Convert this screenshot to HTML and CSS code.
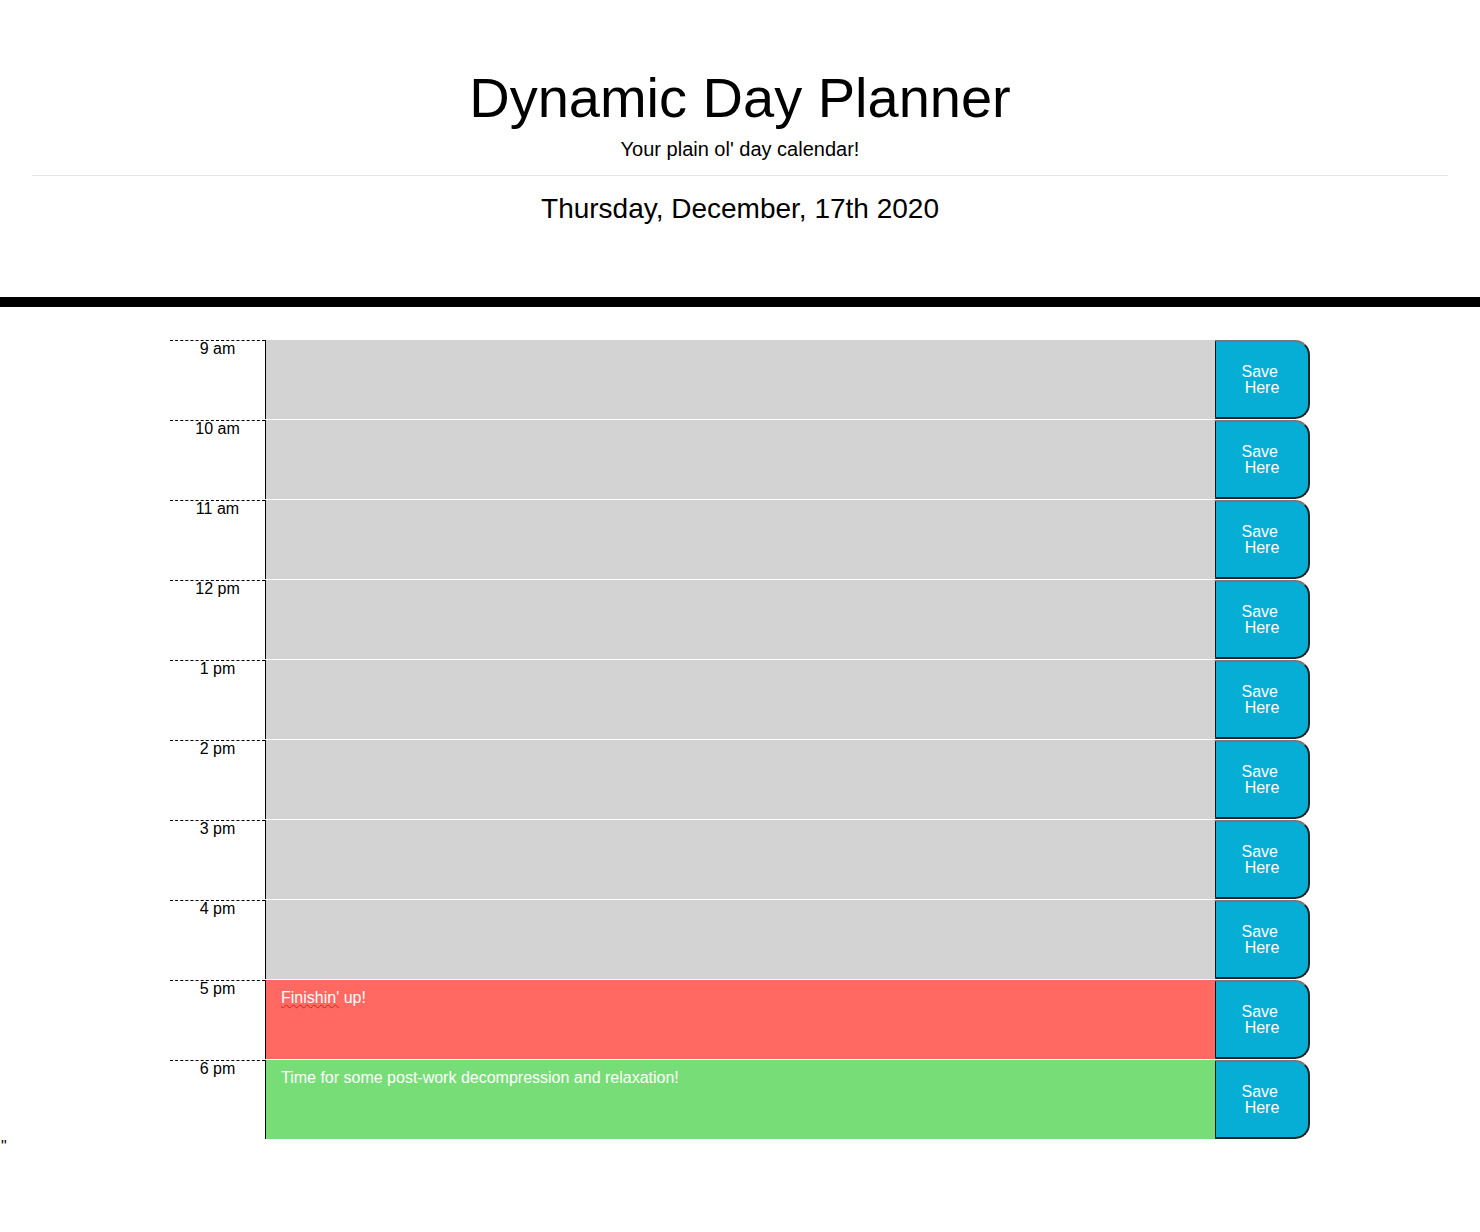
FILE: index.html
```html
<!DOCTYPE html>
<html lang="en">
<head>
<meta charset="utf-8">
<title>Dynamic Day Planner</title>
<link rel="stylesheet" href="styles.css">
</head>
<body>
<header class="jumbotron">
  <h1 class="title">Dynamic Day Planner</h1>
  <p class="lead">Your plain ol' day calendar!</p>
  <hr class="divider">
  <h3 id="currentDay" class="current-day">Thursday, December, 17th 2020</h3>
</header>
<div class="container">
  <div class="row time-block">
    <div class="hour">9 am</div>
    <div class="textarea past"></div>
    <button class="saveBtn">Save&nbsp;<br>Here</button>
  </div>
  <div class="row time-block">
    <div class="hour">10 am</div>
    <div class="textarea past"></div>
    <button class="saveBtn">Save&nbsp;<br>Here</button>
  </div>
  <div class="row time-block">
    <div class="hour">11 am</div>
    <div class="textarea past"></div>
    <button class="saveBtn">Save&nbsp;<br>Here</button>
  </div>
  <div class="row time-block">
    <div class="hour">12 pm</div>
    <div class="textarea past"></div>
    <button class="saveBtn">Save&nbsp;<br>Here</button>
  </div>
  <div class="row time-block">
    <div class="hour">1 pm</div>
    <div class="textarea past"></div>
    <button class="saveBtn">Save&nbsp;<br>Here</button>
  </div>
  <div class="row time-block">
    <div class="hour">2 pm</div>
    <div class="textarea past"></div>
    <button class="saveBtn">Save&nbsp;<br>Here</button>
  </div>
  <div class="row time-block">
    <div class="hour">3 pm</div>
    <div class="textarea past"></div>
    <button class="saveBtn">Save&nbsp;<br>Here</button>
  </div>
  <div class="row time-block">
    <div class="hour">4 pm</div>
    <div class="textarea past"></div>
    <button class="saveBtn">Save&nbsp;<br>Here</button>
  </div>
  <div class="row time-block">
    <div class="hour">5 pm</div>
    <div class="textarea present"><span class="misspelled">Finishin'</span> up!</div>
    <button class="saveBtn">Save&nbsp;<br>Here</button>
  </div>
  <div class="row time-block">
    <div class="hour">6 pm</div>
    <div class="textarea future">Time for some post-work decompression and relaxation!</div>
    <button class="saveBtn">Save&nbsp;<br>Here</button>
  </div>
</div>
<div class="stray">"</div>
</body>
</html>
```
FILE: styles.css
```css
* {
  box-sizing: border-box;
}

body {
  margin: 0;
  font-family: "Liberation Sans", Arial, sans-serif;
  font-size: 16px;
  line-height: 1;
  color: #000;
  background: #fff;
}

.jumbotron {
  padding: 64px 32px;
  margin-bottom: 32px;
  text-align: center;
  border-bottom: 10px solid #000;
}

.title {
  margin: 0 0 8px;
  font-size: 56px;
  font-weight: 300;
  line-height: 1.2;
}

.lead {
  margin: 0 0 16px;
  font-size: 20px;
  line-height: 1;
}

.divider {
  margin: 0 0 16px;
  height: 0;
  border: 0;
  border-top: 1px solid rgba(0, 0, 0, 0.1);
}

.current-day {
  margin: 0 0 7.2px;
  font-size: 28px;
  font-weight: 400;
  line-height: 33.6px;
}

.container {
  width: 1140px;
  margin: 0 auto;
}

.row {
  display: grid;
  grid-template-columns: 95px 950px 95px;
  height: 80px;
  border-top: 1px solid #fff;
}

.hour {
  padding: 0 15px;
  text-align: center;
  background: #fff;
  color: #000;
  border-top: 1px dashed #000;
  font-size: 16px;
  line-height: 16px;
}

.textarea {
  padding: 10px 15px;
  border-left: 1px solid #000;
  color: #fff;
  font-size: 16px;
  line-height: 16px;
  white-space: pre-wrap;
}

.past {
  background: #d3d3d3;
}

.present {
  background: #ff6961;
}

.future {
  background: #77dd77;
}

.misspelled {
  text-decoration: underline wavy #e0201b;
  text-decoration-thickness: 1px;
  text-underline-offset: 1px;
}

.saveBtn {
  height: 100%;
  padding: 2px 10px 0;
  margin: 0;
  background: #06aed5;
  color: #fff;
  font-family: "Liberation Sans", Arial, sans-serif;
  font-size: 16px;
  line-height: 16px;
  text-align: center;
  border-top: 2px solid #767676;
  border-left: 1px solid #111;
  border-right: 2px solid #222;
  border-bottom: 2px solid #222;
  border-radius: 0 15px 15px 0;
}

.stray {
  padding-left: 1px;
  font-size: 16px;
  line-height: 16px;
}
```
